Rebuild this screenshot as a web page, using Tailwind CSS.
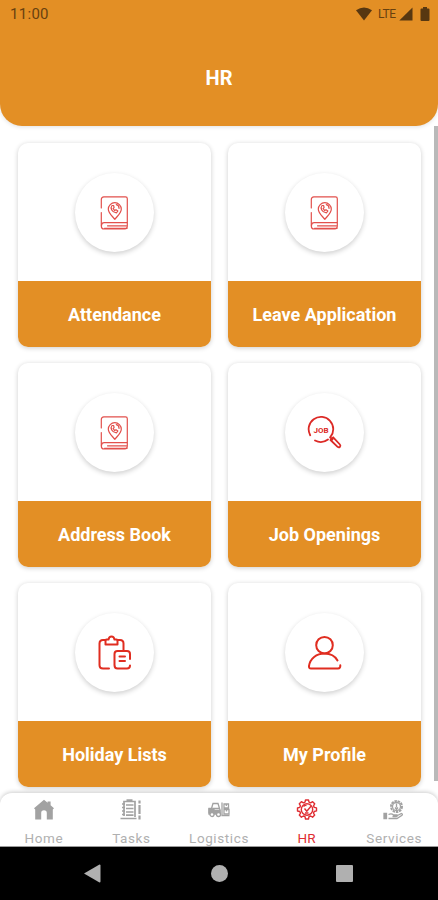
<!DOCTYPE html>
<html lang="en">
<head>
    <meta charset="UTF-8" />
    <meta name="viewport" content="width=device-width, initial-scale=1.0" />
    <title>HR</title>
    <script src="https://cdn.jsdelivr.net/npm/@tailwindcss/browser@4"></script>
</head>
<body class="bg-white font-['Roboto',sans-serif]">
    <!-- Shared icon -->
    <svg class="hidden">
        <symbol id="book" viewBox="0 0 32 36" fill="none" stroke="#e2504c" stroke-width="1.2" stroke-linecap="round" stroke-linejoin="round">
            <path d="M2.300 13V4.500q0-2.600 2.600-2.600H26.500q1.800 0 1.800 1.800V31q0 3-2.500 3H5q-2.700 0-2.700-3V17.500" />
            <path d="M2.500 30.500q0-2.800 2.800-2.800H28M28 33.300H5.500M8.500 30.800H27.500" />
            <path d="M15.800 24.400c-2.800-3.600-6.500-6.600-6.500-10.200a6.500 6.500 0 0 1 13 0c0 3.600-3.700 6.600-6.500 10.200z" />
            <path d="M13 10.500c-2 2.500-.2 6.800 4.400 7.400l1.500-1.900-1.900-1.300-1.300.9-1.600-2.200 1-.8-.5-2.100zM17.300 9.600c1.900.3 2.800 1.900 2.700 3.800" />
        </symbol>
    </svg>

    <div class="w-[438px] h-[900px] flex flex-col overflow-hidden">
        <!-- Header -->
        <header class="relative z-10 h-[126px] shrink-0 bg-[#e38f25] rounded-b-[22px] shadow-[0_1px_4px_rgba(0,0,0,0.12)]">
            <div class="h-7 pl-[10px] pr-[8px] flex items-center justify-between text-[#68410f]">
                <span class="pt-px text-[15px] tracking-[0.3px]">11:00</span>
                <div class="flex items-center">
                    <svg class="w-4 h-[14px]" viewBox="0 0 16 14" fill="#573711"><path d="M0 3.200Q8-2.200 16 3.200L8 13.500z" /></svg>
                    <span class="ml-[6px] w-[19px] text-[12px] leading-none tracking-[-0.4px]">LTE</span>
                    <svg class="ml-[2px] w-[14px] h-[14px]" viewBox="0 0 14 14" fill="#573711"><path d="M13.500.5v13H.3z" /></svg>
                    <svg class="ml-[7px] w-[10px] h-[14px]" viewBox="0 0 10 14" fill="#573711"><path d="M3 0h4v1.500h1.500q1 0 1 1V13q0 1-1 1h-7q-1 0-1-1V2.500q0-1 1-1H3z" /></svg>
                </div>
            </div>
            <h1 class="mt-[38px] text-center text-[20px] leading-6 font-bold text-white">HR</h1>
        </header>

        <!-- Menu cards -->
        <main class="h-[667px] shrink-0 flex justify-between">
            <div class="pl-[18px] pt-[17px] grid grid-cols-[193px_193px] auto-rows-[204px] gap-x-[17px] gap-y-4">
                <div class="flex flex-col overflow-hidden rounded-[10px] bg-white shadow-[0_1px_5px_rgba(0,0,0,0.2)]">
                    <div class="flex-1 pt-px flex items-center justify-center">
                        <div class="size-[79px] rounded-full bg-white flex items-center justify-center shadow-[0_2px_5px_rgba(0,0,0,0.19)]"><svg class="w-8 h-9"><use href="#book" /></svg></div>
                    </div>
                    <div class="h-[66px] pt-px bg-[#e38f25] flex items-center justify-center text-[18px] font-bold text-white">Attendance</div>
                </div>
                <div class="flex flex-col overflow-hidden rounded-[10px] bg-white shadow-[0_1px_5px_rgba(0,0,0,0.2)]">
                    <div class="flex-1 pt-px flex items-center justify-center">
                        <div class="size-[79px] rounded-full bg-white flex items-center justify-center shadow-[0_2px_5px_rgba(0,0,0,0.19)]"><svg class="w-8 h-9"><use href="#book" /></svg></div>
                    </div>
                    <div class="h-[66px] pt-px bg-[#e38f25] flex items-center justify-center text-[18px] font-bold text-white">Leave Application</div>
                </div>
                <div class="flex flex-col overflow-hidden rounded-[10px] bg-white shadow-[0_1px_5px_rgba(0,0,0,0.2)]">
                    <div class="flex-1 pt-px flex items-center justify-center">
                        <div class="size-[79px] rounded-full bg-white flex items-center justify-center shadow-[0_2px_5px_rgba(0,0,0,0.19)]"><svg class="w-8 h-9"><use href="#book" /></svg></div>
                    </div>
                    <div class="h-[66px] pt-px bg-[#e38f25] flex items-center justify-center text-[18px] font-bold text-white">Address Book</div>
                </div>
                <div class="flex flex-col overflow-hidden rounded-[10px] bg-white shadow-[0_1px_5px_rgba(0,0,0,0.2)]">
                    <div class="flex-1 pt-px flex items-center justify-center">
                        <div class="size-[79px] rounded-full bg-white flex items-center justify-center shadow-[0_2px_5px_rgba(0,0,0,0.19)]">
                            <svg class="size-9" viewBox="0 0 36 36" fill="none" stroke="#dc2a26" stroke-width="1.800" stroke-linecap="round" stroke-linejoin="round">
                                <path d="M3.200 20.200A12.300 12.300 0 1 1 23.300 22.200M21 24.500A12.300 12.300 0 0 1 8 25.500" />
                                <path d="M23.300 22.500L25.500 24.500M23.500 25l2.700-2.700 6.700 7.200q1 1.200 0 2.300t-2.300 0z" />
                                <text x="14" y="18" text-anchor="middle" font-family="Roboto" font-size="8" font-weight="700" fill="#dc2a26" stroke="none">JOB</text>
                            </svg>
                        </div>
                    </div>
                    <div class="h-[66px] pt-px bg-[#e38f25] flex items-center justify-center text-[18px] font-bold text-white">Job Openings</div>
                </div>
                <div class="flex flex-col overflow-hidden rounded-[10px] bg-white shadow-[0_1px_5px_rgba(0,0,0,0.2)]">
                    <div class="flex-1 pt-px flex items-center justify-center">
                        <div class="size-[79px] rounded-full bg-white flex items-center justify-center shadow-[0_2px_5px_rgba(0,0,0,0.19)]">
                            <svg class="size-9" viewBox="0 0 36 36" fill="none" stroke="#e02d20" stroke-width="2" stroke-linecap="round" stroke-linejoin="round">
                                <path d="M12 33.500H6q-3.500 0-3.500-3.500V8.500Q2.500 5 6 5h2.500M20.500 5H23q3.500 0 3.500 3.500V15" />
                                <path d="M8.500 9.500V5.500q0-1 1-1h2q.5-3 3-3t3 3h2q1 0 1 1v4z" />
                                <path d="M33 24v-5q0-3-3-3H20.500q-3 0-3 3V30q0 3.500 3 3.500H30q3 0 3-3M22.500 21.500h5.500M22.500 26h5.500" />
                            </svg>
                        </div>
                    </div>
                    <div class="h-[66px] pt-px bg-[#e38f25] flex items-center justify-center text-[18px] font-bold text-white">Holiday Lists</div>
                </div>
                <div class="flex flex-col overflow-hidden rounded-[10px] bg-white shadow-[0_1px_5px_rgba(0,0,0,0.2)]">
                    <div class="flex-1 pt-px flex items-center justify-center">
                        <div class="size-[79px] rounded-full bg-white flex items-center justify-center shadow-[0_2px_5px_rgba(0,0,0,0.19)]">
                            <svg class="size-9" viewBox="0 0 36 36" fill="none" stroke="#e02d20" stroke-width="2" stroke-linecap="round" stroke-linejoin="round">
                                <circle cx="17.500" cy="10.200" r="8.300" />
                                <path d="M30.500 25.500C28 21 23.500 18.500 17.500 18.500 9.500 18.500 3 23.500 2 31q-.3 2.500 2 2.500H31q2.500 0 2.300-3.300" />
                            </svg>
                        </div>
                    </div>
                    <div class="h-[66px] pt-px bg-[#e38f25] flex items-center justify-center text-[18px] font-bold text-white">My Profile</div>
                </div>
            </div>
            <!-- Scrollbar -->
            <div class="w-1 h-[655px] bg-[#b9b9b9]"></div>
        </main>

        <!-- Bottom tabs -->
        <nav class="relative z-10 h-[54px] shrink-0 grid grid-cols-5 rounded-t-[12px] border-b border-[#9a9a9a] bg-white text-center text-[13.5px] leading-4 tracking-[0.6px] text-[#b0b0b0] shadow-[0_-1px_4px_rgba(0,0,0,0.2)]">
            <div class="pt-[6px] flex flex-col items-center gap-[9px]">
                <svg class="size-[22px]" viewBox="0 0 22 22" fill="#a2a2a2"><path d="M11 .8l3.600 3V2.500h3v3.800L21 9.300l-1.200 1.300V20.500h-6V14a2.800 2.800 0 0 0-5.600 0v6.500h-6V10.600L1 9.300z" /></svg>
                <span>Home</span>
            </div>
            <div class="pt-[6px] flex flex-col items-center gap-[9px]">
                <svg class="size-[22px]" viewBox="0 0 22 22" fill="none" stroke="#a2a2a2" stroke-width="1.700"><path d="M4 17V2.500H15V18M2 5h3M2 8.500h3M2 12h3M2 15.500h3M6 6h7.500M6 9.500h7.500M6 13h7.500M6 16.200h7.500M.5 19.500h16M6.500 1.200h6" /><path d="M19.500 1.500v3M19.500 6v9M19.500 16.500v4" stroke-width="2.200" /></svg>
                <span>Tasks</span>
            </div>
            <div class="pt-[6px] flex flex-col items-center gap-[9px]">
                <svg class="size-[22px]" viewBox="0 0 22 22" fill="none" stroke="#a2a2a2" stroke-width="1.300"><path d="M1 14.500V9.500h2.500l1.500-5h5l2 6.500v4.500M4.500 9.500h7M14 3.500v13h7.500" /><path d="M1 10h4l2 1.500h5V15H1z" fill="#a2a2a2" /><circle cx="4" cy="15.500" r="2" fill="#fff" /><circle cx="10.500" cy="15.500" r="2" fill="#fff" /><path d="M16 10.500h5v4.500h-5zM16 5h4.500v4H16zM18.300 5v2M18.500 10.500v2" /></svg>
                <span>Logistics</span>
            </div>
            <div class="pt-[6px] flex flex-col items-center gap-[9px] text-[#df2e33]">
                <svg class="size-[22px]" viewBox="0 0 22 22" fill="none" stroke="#df2e33" stroke-width="1.400" stroke-linejoin="round"><path d="M9.500 1h3l.5 2.200 1.600.7 2-1.200 2.100 2.100-1.200 2 .7 1.600 2.300.5v3l-2.300.6-.7 1.600 1.200 2-2.100 2.100-2-1.200-1.600.7-.5 2.300h-3l-.5-2.300-1.600-.7-2 1.200-2.100-2.100 1.200-2-.7-1.600L1.500 12V9l2.300-.6.7-1.600-1.200-2 2.100-2.100 2 1.200L9 3.200z" /><circle cx="11" cy="10.500" r="5.700" /><path d="M7.500 7.500q1.500-1.500 3-1M8.500 9.500l2.300 2.800 4.200-5M9 14h3.500" /></svg>
                <span class="tracking-normal">HR</span>
            </div>
            <div class="pt-[6px] flex flex-col items-center gap-[9px]">
                <svg class="size-[22px]" viewBox="0 0 22 22" fill="none" stroke="#a2a2a2" stroke-width="1.300"><circle cx="13.500" cy="7.500" r="5.500" stroke-width="2" stroke-dasharray="2.500 .8" /><circle cx="13.500" cy="7.500" r="4" /><path d="M13.500 4.500v4M12 8.500l1.500 2 1.500-2" /><path d="M1 14.500h2.500v5H1z" fill="#a2a2a2" /><path d="M5.500 15.500q3-1.500 5 .5h3.500q.8 1.500-1 1.500H9.500M14.500 16.500l4-2q1.500.5.500 1.800L14 19.500H5.500" /></svg>
                <span>Services</span>
            </div>
        </nav>

        <!-- System navigation -->
        <div class="h-[53px] shrink-0 bg-black grid grid-cols-[84px_17px_110px_18px_107px_18px] items-center">
            <span></span>
            <svg class="w-[17px] h-[19px]" viewBox="0 0 17 19" fill="#b0b0b0"><path d="M0 9.500L15.500.5q1 0 1 1v16q0 1-1 1z" /></svg>
            <span></span>
            <span class="size-[17px] rounded-full bg-[#b0b0b0]"></span>
            <span></span>
            <span class="size-[17px] rounded-[1px] bg-[#b0b0b0]"></span>
        </div>
    </div>
</body>
</html>
